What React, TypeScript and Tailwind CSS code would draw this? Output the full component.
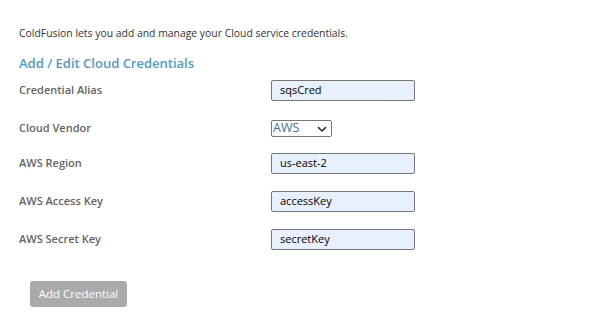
import React from 'react';

const fields = [
  { label: 'Credential Alias', value: 'sqsCred', mt: 'mt-0' },
  { label: 'Cloud Vendor', value: 'AWS', select: true, mt: 'mt-[19px]' },
  { label: 'AWS Region', value: 'us-east-2', mt: 'mt-[16px]' },
  { label: 'AWS Access Key', value: 'accessKey', mt: 'mt-[17px]' },
  { label: 'AWS Secret Key', value: 'secretKey', mt: 'mt-[17px]' },
];

export default function App() {
  return (
    <div className="w-[596px] h-[318px] bg-white font-['Open_Sans',sans-serif] pt-[26px] pl-[19px]">
      <p className="text-[10.4px] leading-[14px] text-[#333]">
        ColdFusion lets you add and manage your Cloud service credentials.
      </p>
      <h2 className="mt-[14px] text-[13px] leading-[18px] font-semibold text-[#4a9bd0]">
        Add / Edit Cloud Credentials
      </h2>

      <div className="mt-[8px] flex flex-col">
        {fields.map((f) => (
          <div key={f.label} className={`flex items-center ${f.mt}`}>
            <label className="w-[252px] text-[11px] font-semibold text-[#646464]">{f.label}</label>
            {f.select ? (
              <div className="relative w-[61px] h-[17px] border border-[#767676] rounded-[2px] bg-white flex items-center">
                <span className="pl-[1px] text-[12.5px] leading-none text-[#3a6fa0]">AWS</span>
                <svg className="absolute right-[4px] top-[5px]" width="10" height="7" viewBox="0 0 10 7">
                  <path d="M1 1.2 L5 5 L9 1.2" fill="none" stroke="#333" strokeWidth="1.6" />
                </svg>
              </div>
            ) : (
              <div className="w-[144px] h-[21px] border border-[#767676] rounded-[2px] bg-[#e8f0fe] flex items-center pl-[8px]">
                <span className="text-[11px] text-black">{f.value}</span>
              </div>
            )}
          </div>
        ))}
      </div>

      <button className="mt-[31px] ml-[11px] w-[97px] h-[26px] rounded-[3px] bg-[#aaaaaa] text-white text-[11.5px]">
        Add Credential
      </button>
    </div>
  );
}
